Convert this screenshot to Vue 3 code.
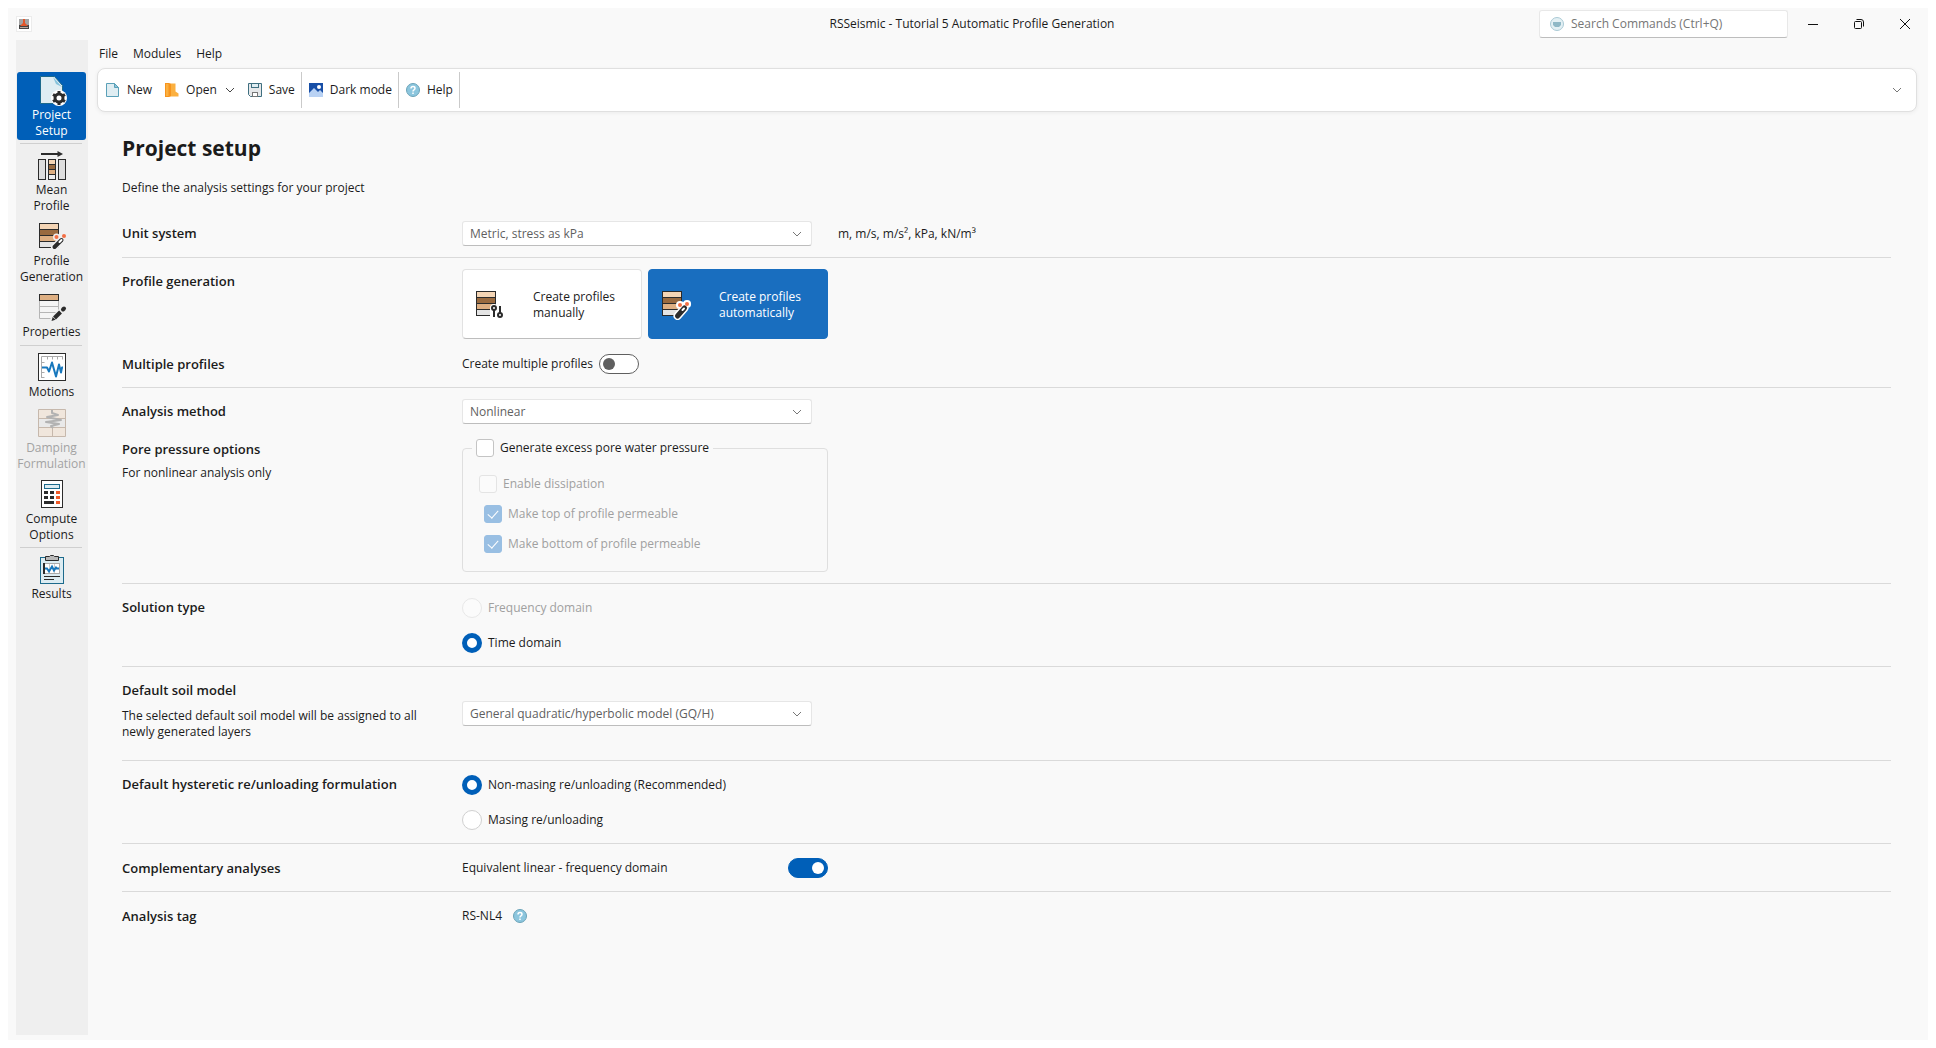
<script setup>
import { ref } from 'vue'

const activePage = ref('project')
const unitSystem = ref('Metric, stress as kPa')
const generation = ref('auto')
const multipleProfiles = ref(false)
const analysisMethod = ref('Nonlinear')
const excessPressure = ref(false)
const solutionType = ref('time')
const soilModel = ref('General quadratic/hyperbolic model (GQ/H)')
const hysteretic = ref('non-masing')
const equivalentLinear = ref(true)
const search = ref('')

const pages = [
  { id: 'project', lines: ['Project', 'Setup'], separator: true },
  { id: 'mean', lines: ['Mean', 'Profile'] },
  { id: 'generation', lines: ['Profile', 'Generation'] },
  { id: 'properties', lines: ['Properties'], separator: true },
  { id: 'motions', lines: ['Motions'] },
  { id: 'damping', lines: ['Damping', 'Formulation'], disabled: true },
  { id: 'compute', lines: ['Compute', 'Options'], separator: true },
  { id: 'results', lines: ['Results'] },
]
</script>

<template>
  <div class="window">
    <header class="titlebar">
      <svg class="app-icon" width="16" height="16" viewBox="0 0 16 16">
        <rect x="0.5" y="0.5" width="15" height="15" fill="#fff" stroke="#ececec" />
        <rect x="3" y="3" width="10" height="10" fill="#a3a3a3" />
        <path d="M3 9h10v4H3z" fill="#444" />
        <path d="M8 3v6" stroke="#e2562b" stroke-width="2" />
        <path d="M4 10l4-4 4 4z" fill="#e2562b" />
        <path d="M4 11.5h8" stroke="#b9a79f" />
      </svg>
      <div class="window-title">RSSeismic - Tutorial 5 Automatic Profile Generation</div>
      <div class="titlebar-right">
        <label class="search">
          <svg width="14" height="14" viewBox="0 0 14 14">
            <circle cx="7" cy="7" r="6.5" fill="#e3f0f4" stroke="#a9c9d4" />
            <path d="M3 5h8v3L9 10H5L3 8z" fill="#8fb8c6" />
          </svg>
          <input v-model="search" type="text" placeholder="Search Commands (Ctrl+Q)" aria-label="Search Commands" />
        </label>
        <div class="window-buttons">
          <button type="button" aria-label="Minimize">
            <svg width="12" height="12" viewBox="0 0 12 12"><path d="M1 6.5h10" stroke="#111" /></svg>
          </button>
          <button type="button" aria-label="Restore">
            <svg width="12" height="12" viewBox="0 0 12 12" fill="none" stroke="#111">
              <rect x="1.5" y="3.5" width="7" height="7" rx="1" />
              <path d="M3.5 1.5H8a2.5 2.5 0 0 1 2.5 2.5v4.5" />
            </svg>
          </button>
          <button type="button" aria-label="Close">
            <svg width="12" height="12" viewBox="0 0 12 12"><path d="M1 1l10 10M11 1L1 11" stroke="#111" /></svg>
          </button>
        </div>
      </div>
    </header>

    <div class="body">
      <nav class="sidebar">
        <template v-for="page in pages" :key="page.id">
          <button
            type="button"
            class="page-btn"
            :class="{ active: activePage === page.id, single: page.lines.length === 1 }"
            :disabled="page.disabled"
            @click="activePage = page.id"
          >
            <svg v-if="page.id === 'project'" width="30" height="30" viewBox="0 0 30 30">
              <path d="M3.5 0.5h14l8 9v18h-22z" fill="#dfedf2" stroke="#1c6a8c" />
              <path d="M16 1l9 10-6-3z" fill="#86c3dc" />
              <circle cx="22" cy="22" r="8" fill="#fff" />
              <circle cx="22" cy="22" r="4" fill="none" stroke="#2b2b2b" stroke-width="3" />
              <path
                d="M22 15v2.5M22 26.5V29M16 18.5l2.2 1.3M25.8 24.2l2.2 1.3M16 25.5l2.2-1.3M25.8 19.8l2.2-1.3"
                stroke="#2b2b2b"
                stroke-width="3"
              />
            </svg>
            <svg v-else-if="page.id === 'mean'" width="30" height="30" viewBox="0 0 30 30" stroke="#2b2b2b">
              <path d="M4 3h19" stroke-width="2" />
              <path d="M20.5 0L26 3l-5.500 3z" fill="#2b2b2b" stroke="none" />
              <rect x="1.5" y="8.5" width="7" height="20" fill="#dedede" />
              <rect x="21.5" y="8.5" width="7" height="20" fill="#dedede" />
              <rect x="11.5" y="8.5" width="7" height="5" fill="#f4d5b5" />
              <rect x="11.5" y="13.5" width="7" height="5" fill="#996a3f" />
              <rect x="11.5" y="18.5" width="7" height="5" fill="#deaf82" />
              <rect x="11.5" y="23.5" width="7" height="5" fill="#eee" />
            </svg>
            <svg v-else-if="page.id === 'generation'" width="30" height="30" viewBox="0 0 30 30">
              <g stroke="#2b2b2b">
                <rect x="2.5" y="1.5" width="19" height="6" fill="#f4d5b5" />
                <rect x="2.5" y="7.5" width="19" height="6" fill="#996a3f" />
                <rect x="2.5" y="13.5" width="19" height="6" fill="#deaf82" />
                <rect x="2.5" y="19.5" width="19" height="6" fill="#e4e4e4" />
              </g>
              <path d="M17.5 25l8-8M19.5 15h.1M27.500 14h.1" stroke="#efefef" stroke-width="7" stroke-linecap="round" />
              <path d="M17.5 25l7-7" stroke="#2b2b2b" stroke-width="4" stroke-linecap="round" />
              <path d="M22.500 20l2-2" stroke="#fff" stroke-width="2" stroke-linecap="round" />
              <circle cx="19.5" cy="15" r="2" fill="#f36f45" />
              <circle cx="27" cy="14" r="2" fill="#f36f45" />
            </svg>
            <svg v-else-if="page.id === 'properties'" width="30" height="30" viewBox="0 0 30 30">
              <path d="M2.5 7.5h19v18h-19zM2.5 13.5h19M2.5 19.5h19" fill="#f4f4f4" stroke="#b5b5b5" />
              <rect x="2.5" y="1.5" width="19" height="6" fill="#deaf82" stroke="#2b2b2b" />
              <path d="M17 26l9-9" stroke="#efefef" stroke-width="7" stroke-linecap="round" />
              <path d="M17.5 25l6-6" stroke="#2b2b2b" stroke-width="4" />
              <path d="M26 16.5l1-1" stroke="#2b2b2b" stroke-width="4" stroke-linecap="round" />
              <path d="M14.5 28l1.2-4 2.8 2.8z" fill="#2b2b2b" />
            </svg>
            <svg v-else-if="page.id === 'motions'" width="30" height="30" viewBox="0 0 30 30" fill="none">
              <rect x="1.5" y="0.5" width="27" height="27" fill="#fff" stroke="#2b2b2b" />
              <path
                d="M4.5 25V3.500H26M4.5 9.5h3M4.5 19.5h3M4.5 24.5h3M10.5 3.500v3M15.5 3.500v3M20.5 3.500v3M25.5 3.500v3"
                stroke="#aaa"
              />
              <path d="M5 14.500h5l2 4 3-9 4 14 3-12 2 8 1-5h1" stroke="#1878bd" stroke-width="2" stroke-linejoin="round" />
            </svg>
            <svg v-else-if="page.id === 'damping'" width="30" height="30" viewBox="0 0 30 30" fill="none">
              <rect x="1.5" y="0.5" width="27" height="27" fill="#f0e6dc" />
              <path d="M2 10h26v8H2z" fill="#e9e9e9" />
              <path d="M1.5 0.5h27v27h-27zM1.5 9.5h27M1.5 18.5h27M15.5 18v9" stroke="#c6b8ac" />
              <path
                d="M15 1v3l6 2-11 2 14 3-15 2 13 2-8 2 2 2"
                stroke="#b2b2b2"
                stroke-width="2"
                stroke-linejoin="round"
              />
            </svg>
            <svg v-else-if="page.id === 'compute'" width="30" height="30" viewBox="0 0 30 30">
              <rect x="4.5" y="0.5" width="21" height="27" fill="#fff" stroke="#2b2b2b" />
              <rect x="7.5" y="4.5" width="15" height="4" fill="#dcecf2" stroke="#1c6a8c" />
              <path d="M7 11h4v3H7zM13 11h4v3h-4zM7 16h4v3H7zM13 16h4v3h-4zM7 21h10v3H7z" fill="#2b2b2b" />
              <path d="M19 11h4v3h-4zM19 16h4v3h-4zM19 21h4v3h-4z" fill="#f05a28" />
            </svg>
            <svg v-else width="30" height="30" viewBox="0 0 30 30" fill="none">
              <rect x="3.5" y="2.5" width="23" height="26" fill="#dcecf2" stroke="#1c6a8c" />
              <path d="M8.5 5.5v-4h4l1-1h3l1 1h4v4z" fill="#b9b9b9" stroke="#2b2b2b" />
              <rect x="7.5" y="8.5" width="15" height="10" fill="#fff" stroke="#aaa" />
              <path d="M12.5 9v9M17.5 9v9" stroke="#ccc" />
              <path d="M7 8v11" stroke="#2b2b2b" stroke-width="2" />
              <path d="M8 13.5h2l2 3 3-5 2 4 2-3 1 1h2" stroke="#1878bd" stroke-width="2" />
              <path d="M7 21.5h16M7 24.5h10" stroke="#2b2b2b" />
            </svg>
            <span v-for="line in page.lines" :key="line">{{ line }}</span>
          </button>
          <hr v-if="page.separator" />
        </template>
      </nav>

      <main class="main">
        <div class="menu">
          <button type="button">File</button>
          <button type="button">Modules</button>
          <button type="button">Help</button>
        </div>

        <div class="toolbar">
          <div class="tool-group">
            <button type="button" class="tool">
              <svg width="14" height="14" viewBox="0 0 14 14">
                <path d="M0.5 0.5h8l4 4v9h-12z" fill="#dfedf2" stroke="#5aa0b8" />
                <path d="M8.5 0.5v4h4z" fill="#8cc4d9" stroke="#5aa0b8" />
              </svg>
              New
            </button>
            <button type="button" class="tool">
              <svg width="14" height="14" viewBox="0 0 14 14">
                <path d="M0.5 0.5h10v8l3 2v3h-13z" fill="#fbb040" />
                <path d="M0 0h4l2 1v12l-2 1H0z" fill="#f7941d" />
                <path d="M1 1h2.5v12H1z" fill="#fbb040" />
              </svg>
              Open
              <svg class="tool-arrow" width="10" height="10" viewBox="0 0 10 10">
                <path d="M1 3l4 4 4-4" fill="none" stroke="#444" />
              </svg>
            </button>
            <button type="button" class="tool">
              <svg width="14" height="14" viewBox="0 0 14 14" stroke="#3f6f80">
                <path d="M0.5 0.5h13v13h-11l-2-2z" fill="#e6e8ea" />
                <rect x="3.5" y="0.5" width="7" height="4" fill="#dfedf2" />
                <rect x="4.5" y="9.5" width="5" height="4" fill="#fff" stroke="#777" />
              </svg>
              Save
            </button>
          </div>
          <div class="tool-group">
            <button type="button" class="tool">
              <svg width="14" height="14" viewBox="0 0 14 14">
                <path d="M0 0h14v14H0z" fill="#174ea6" />
                <path d="M0 10l5-5 4 4 2-2 3 3v4H0z" fill="#b9d2f4" />
                <circle cx="10" cy="4" r="2" fill="#fff" />
              </svg>
              Dark mode
            </button>
          </div>
          <div class="tool-group">
            <button type="button" class="tool">
              <svg width="14" height="14" viewBox="0 0 14 14">
                <circle cx="7" cy="7" r="6.5" fill="#8cc6de" stroke="#6ba3b8" />
                <path
                  d="M5 5.5q0-2 2-2t2 1.7q0 1-1 1.6T7 8.5M7 9.5v1.5"
                  fill="none"
                  stroke="#fff"
                  stroke-width="1.5"
                />
              </svg>
              Help
            </button>
          </div>
          <button type="button" class="toolbar-more" aria-label="More commands">
            <svg width="10" height="10" viewBox="0 0 10 10"><path d="M1 3l4 4 4-4" fill="none" stroke="#777" /></svg>
          </button>
        </div>

        <div class="content">
          <h1>Project setup</h1>
          <p class="intro">Define the analysis settings for your project</p>

          <section class="group">
            <div class="row">
              <label class="heading" for="unit-system">Unit system</label>
              <div class="field units-field">
                <div class="select">
                  <select id="unit-system" v-model="unitSystem">
                    <option>Metric, stress as kPa</option>
                  </select>
                  <svg width="10" height="10" viewBox="0 0 10 10"><path d="M1 3l4 4 4-4" fill="none" stroke="#777" /></svg>
                </div>
                <span>m, m/s, m/s², kPa, kN/m³</span>
              </div>
            </div>
          </section>

          <section class="group">
            <div class="row">
              <h2 class="heading">Profile generation</h2>
              <div class="tiles">
                <button
                  type="button"
                  class="tile"
                  :class="{ active: generation === 'manual' }"
                  @click="generation = 'manual'"
                >
                  <svg width="30" height="30" viewBox="0 0 30 30">
                    <g stroke="#2b2b2b">
                      <rect x="0.5" y="1.5" width="19" height="6" fill="#f4d5b5" />
                      <rect x="0.5" y="7.5" width="19" height="6" fill="#996a3f" />
                      <rect x="0.5" y="13.5" width="19" height="6" fill="#deaf82" />
                      <rect x="0.5" y="19.5" width="19" height="6" fill="#e4e4e4" />
                    </g>
                    <path d="M18 18v8M24 18v8" stroke="#fff" stroke-width="8" stroke-linecap="round" />
                    <path d="M18 19v8M24 16v8" stroke="#2b2b2b" stroke-width="2" />
                    <circle cx="18" cy="18" r="2" fill="#fff" stroke="#2b2b2b" stroke-width="2" />
                    <circle cx="24" cy="25" r="2" fill="#fff" stroke="#2b2b2b" stroke-width="2" />
                  </svg>
                  <span>Create profiles<br />manually</span>
                </button>
                <button
                  type="button"
                  class="tile"
                  :class="{ active: generation === 'auto' }"
                  @click="generation = 'auto'"
                >
                  <svg width="30" height="30" viewBox="0 0 30 30">
                    <g stroke="#2b2b2b">
                      <rect x="0.5" y="1.5" width="19" height="6" fill="#f4d5b5" />
                      <rect x="0.5" y="7.5" width="19" height="6" fill="#996a3f" />
                      <rect x="0.5" y="13.5" width="19" height="6" fill="#deaf82" />
                      <rect x="0.5" y="19.5" width="19" height="6" fill="#e4e4e4" />
                    </g>
                    <path d="M15.5 26l7-8M18 15h.1M25 14h.1" stroke="#fff" stroke-width="8" stroke-linecap="round" />
                    <path d="M15.5 26l7-8" stroke="#2b2b2b" stroke-width="5" stroke-linecap="round" />
                    <path d="M20.5 20l1.5-1.5" stroke="#fff" stroke-width="2" stroke-linecap="round" />
                    <circle cx="18" cy="15" r="2" fill="#f36f45" />
                    <circle cx="25" cy="14" r="2" fill="#f36f45" />
                  </svg>
                  <span>Create profiles<br />automatically</span>
                </button>
              </div>
            </div>
            <div class="row multiple-row">
              <h2 class="heading">Multiple profiles</h2>
              <label class="multiple">
                Create multiple profiles
                <input v-model="multipleProfiles" type="checkbox" role="switch" class="switch" />
              </label>
            </div>
          </section>

          <section class="group">
            <div class="row">
              <label class="heading" for="analysis-method">Analysis method</label>
              <div class="field">
                <div class="select">
                  <select id="analysis-method" v-model="analysisMethod">
                    <option>Nonlinear</option>
                  </select>
                  <svg width="10" height="10" viewBox="0 0 10 10"><path d="M1 3l4 4 4-4" fill="none" stroke="#777" /></svg>
                </div>
              </div>
            </div>
            <div class="row pore-row">
              <div>
                <h2 class="heading">Pore pressure options</h2>
                <p class="hint">For nonlinear analysis only</p>
              </div>
              <fieldset class="pore">
                <legend>
                  <label class="check">
                    <input v-model="excessPressure" type="checkbox" />
                    Generate excess pore water pressure
                  </label>
                </legend>
                <label class="check disabled">
                  <input type="checkbox" disabled />
                  Enable dissipation
                </label>
                <label class="check disabled nested">
                  <input type="checkbox" checked disabled />
                  Make top of profile permeable
                </label>
                <label class="check disabled nested">
                  <input type="checkbox" checked disabled />
                  Make bottom of profile permeable
                </label>
              </fieldset>
            </div>
          </section>

          <section class="group">
            <div class="row">
              <h2 class="heading">Solution type</h2>
              <div class="radios">
                <label class="radio disabled">
                  <input v-model="solutionType" type="radio" name="solution" value="frequency" disabled />
                  Frequency domain
                </label>
                <label class="radio">
                  <input v-model="solutionType" type="radio" name="solution" value="time" />
                  Time domain
                </label>
              </div>
            </div>
          </section>

          <section class="group">
            <div class="row soil-row">
              <div>
                <label class="heading" for="soil-model">Default soil model</label>
                <p class="hint">The selected default soil model will be assigned to all<br />newly generated layers</p>
              </div>
              <div class="field">
                <div class="select">
                  <select id="soil-model" v-model="soilModel">
                    <option>General quadratic/hyperbolic model (GQ/H)</option>
                  </select>
                  <svg width="10" height="10" viewBox="0 0 10 10"><path d="M1 3l4 4 4-4" fill="none" stroke="#777" /></svg>
                </div>
              </div>
            </div>
          </section>

          <section class="group">
            <div class="row">
              <h2 class="heading">Default hysteretic re/unloading formulation</h2>
              <div class="radios">
                <label class="radio">
                  <input v-model="hysteretic" type="radio" name="hysteretic" value="non-masing" />
                  Non-masing re/unloading (Recommended)
                </label>
                <label class="radio">
                  <input v-model="hysteretic" type="radio" name="hysteretic" value="masing" />
                  Masing re/unloading
                </label>
              </div>
            </div>
          </section>

          <section class="group short">
            <div class="row">
              <h2 class="heading">Complementary analyses</h2>
              <label class="equivalent">
                Equivalent linear - frequency domain
                <input v-model="equivalentLinear" type="checkbox" role="switch" class="switch" />
              </label>
            </div>
          </section>

          <section class="group short">
            <div class="row">
              <h2 class="heading">Analysis tag</h2>
              <div class="tag">
                RS-NL4
                <button type="button" aria-label="Analysis tag help">
                  <svg width="14" height="14" viewBox="0 0 14 14">
                    <circle cx="7" cy="7" r="6.5" fill="#8cc6de" stroke="#6ba3b8" />
                    <path
                      d="M5 5.5q0-2 2-2t2 1.7q0 1-1 1.6T7 8.5M7 9.5v1.5"
                      fill="none"
                      stroke="#fff"
                      stroke-width="1.5"
                    />
                  </svg>
                </button>
              </div>
            </div>
          </section>
        </div>
      </main>
    </div>
  </div>
</template>

<style>
body {
  background: #fff;
}
</style>

<style scoped>
* {
  box-sizing: border-box;
}

.window {
  display: flex;
  flex-direction: column;
  min-height: calc(100vh - 16px);
  margin: 8px;
  padding-bottom: 5px;
  background: #f9f9f9;
  color: #1b1b1b;
  font-family: 'Segoe UI', 'Open Sans', 'Noto Sans', sans-serif;
  font-size: 12px;
  line-height: 16px;
}

button,
input,
select {
  margin: 0;
  font: inherit;
  color: inherit;
}

button {
  padding: 0;
  border: none;
  background: transparent;
}

svg {
  display: block;
  flex: none;
}

/* title bar */
.titlebar {
  display: grid;
  grid-template-columns: 1fr auto 1fr;
  align-items: center;
  height: 32px;
  padding-left: 8px;
}

.titlebar-right {
  display: flex;
  justify-content: flex-end;
  align-items: center;
  gap: 2px;
}

.search {
  display: flex;
  align-items: center;
  gap: 7px;
  width: 249px;
  height: 28px;
  padding: 0 10px;
  border: 1px solid #e8e8e8;
  border-bottom-color: #bdbdbd;
  border-radius: 3px;
  background: #fff;
}

.search input {
  flex: 1;
  min-width: 0;
  padding: 0;
  border: none;
  outline: none;
  background: transparent;
}

.search input::placeholder {
  color: #767676;
  opacity: 1;
}

.window-buttons {
  display: flex;
}

.window-buttons button {
  display: grid;
  place-items: center;
  width: 46px;
  height: 32px;
}

.body {
  display: flex;
  flex: 1;
  padding-left: 8px;
}

/* sidebar */
.sidebar {
  display: flex;
  flex-direction: column;
  gap: 3px;
  flex: none;
  width: 72px;
  padding: 32px 2px 0 1px;
  background: #efefef;
}

.sidebar hr {
  width: 62px;
  height: 1px;
  margin: 0 0 0 3px;
  border: none;
  background: #cfcfcf;
}

.page-btn {
  display: flex;
  flex-direction: column;
  align-items: center;
  min-height: 68px;
  padding-top: 4px;
  border-radius: 3px;
  white-space: nowrap;
}

.page-btn.single {
  min-height: 53px;
}

.page-btn svg {
  margin-bottom: 1px;
}

.page-btn.active {
  background: #005fb8;
  color: #fff;
}

.page-btn:disabled {
  color: #a3a3a3;
}

.main {
  flex: 1;
  min-width: 0;
  padding: 0 11px 0 9px;
}

/* menu and toolbar */
.menu {
  display: flex;
  gap: 15px;
  height: 28px;
  padding-left: 2px;
}

.toolbar {
  display: flex;
  align-items: center;
  height: 44px;
  padding: 0 14px 0 8px;
  border: 1px solid #e0e0e0;
  border-radius: 8px;
  background: #fff;
  box-shadow: 0 1px 4px rgba(0, 0, 0, 0.06);
}

.tool-group {
  display: flex;
  align-items: center;
  gap: 13px;
  height: 36px;
  padding-right: 6px;
  margin-right: 7px;
  border-right: 1px solid #cacaca;
}

.tool {
  display: flex;
  align-items: center;
  gap: 7px;
}

.tool-arrow {
  margin-left: 1px;
}

.toolbar-more {
  margin-left: auto;
}

/* settings */
.content {
  padding: 21px 26px 0 25px;
}

h1 {
  margin: 0;
  font-size: 21px;
  font-weight: 700;
  line-height: 30px;
}

p {
  margin: 0;
}

.intro {
  margin: 17px 0 14px;
}

.group {
  padding: 11px 0;
  border-bottom: 1px solid #dadada;
}

.group.short {
  padding-top: 12px;
}

.group:last-child {
  border-bottom: none;
}

.row {
  display: grid;
  grid-template-columns: 340px minmax(0, 1fr);
  align-items: start;
}

.heading {
  display: block;
  margin: 0;
  padding: 2px 0;
  font-size: 13px;
  font-weight: 600;
  line-height: 20px;
}

.hint {
  margin-top: 6px;
}

.units-field {
  display: flex;
  align-items: center;
  gap: 26px;
}

.select {
  display: grid;
  align-items: center;
  width: 350px;
}

.select select,
.select svg {
  grid-area: 1 / 1;
}

.select select {
  width: 100%;
  height: 25px;
  padding: 0 28px 0 7px;
  border: 1px solid #e6e6e6;
  border-bottom-color: #bdbdbd;
  border-radius: 3px;
  background: #fff;
  color: #5f5f5f;
  appearance: none;
}

.select svg {
  justify-self: end;
  margin-right: 10px;
  pointer-events: none;
}

.tiles {
  display: flex;
  gap: 6px;
}

.tile {
  display: flex;
  align-items: center;
  gap: 27px;
  width: 180px;
  height: 70px;
  padding: 2px 0 0 13px;
  border: 1px solid #e2e2e2;
  border-bottom-color: #bdbdbd;
  border-radius: 4px;
  background: #fff;
  text-align: left;
}

.tile.active {
  border-color: #196ebf;
  background: #196ebf;
  color: #fff;
}

.multiple-row {
  margin-top: 13px;
}

.multiple {
  display: flex;
  align-items: center;
  gap: 6px;
  height: 24px;
}

.switch {
  width: 40px;
  height: 20px;
  padding: 3px;
  border: 1px solid #5f5f5f;
  border-radius: 10px;
  background: #fff;
  appearance: none;
}

.switch::before {
  content: '';
  display: block;
  width: 12px;
  height: 12px;
  border-radius: 50%;
  background: #5f5f5f;
}

.switch:checked {
  border-color: #005fb8;
  background: #005fb8;
}

.switch:checked::before {
  margin-left: auto;
  background: #fff;
}

.pore-row {
  margin-top: 15px;
}

.pore-row .heading {
  padding: 0;
}

.pore {
  display: grid;
  gap: 12px;
  width: 366px;
  margin: 0;
  padding: 18px 16px;
  border: 1px solid #dfdfdf;
  border-radius: 4px;
}

.pore legend {
  margin-left: -7px;
  padding: 0 4px;
}

.check,
.radio {
  display: flex;
  align-items: center;
  gap: 6px;
}

.check.nested {
  margin-left: 5px;
}

.check input {
  display: grid;
  place-items: center;
  width: 18px;
  height: 18px;
  border: 1px solid #c4c4c4;
  border-radius: 3px;
  background: #fff;
  appearance: none;
}

.check input:disabled {
  border-color: #e4e4e4;
  background: #fbfbfb;
}

.check input:checked {
  border-color: #99bfe3;
  background: #99bfe3;
}

.check input:checked::before {
  content: '';
  width: 5px;
  height: 9px;
  margin-bottom: 3px;
  border: solid #fff;
  border-width: 0 1px 1px 0;
  transform: rotate(42deg);
}

.disabled {
  color: #a0a0a0;
}

.radios {
  display: grid;
  gap: 15px;
  padding: 3px 0 2px;
}

.radio input {
  width: 20px;
  height: 20px;
  border: 1px solid #d0d0d0;
  border-radius: 50%;
  background: #fff;
  appearance: none;
}

.radio input:disabled {
  border-color: #e8e8e8;
  background: #fbfbfb;
}

.radio input:checked {
  border: 5px solid #005fb8;
}

.soil-row {
  min-height: 71px;
}

.soil-row .field {
  align-self: center;
}

.equivalent {
  display: flex;
  align-items: center;
  justify-content: space-between;
  width: 366px;
  height: 24px;
}

.tag {
  display: flex;
  align-items: center;
  gap: 11px;
  height: 24px;
}
</style>
